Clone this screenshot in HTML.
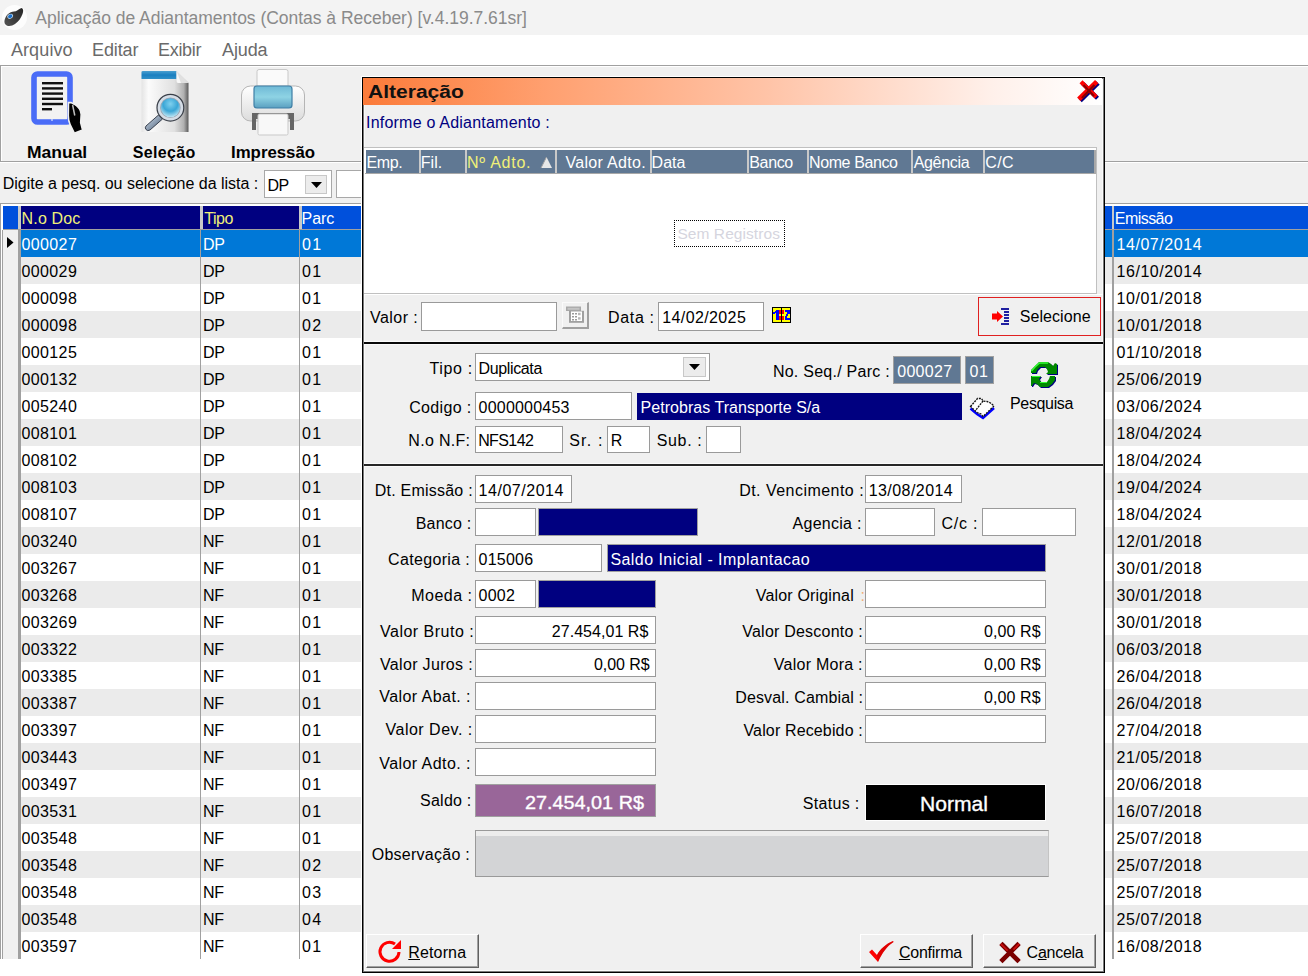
<!DOCTYPE html><html><head><meta charset="utf-8"><style>
html,body{margin:0;padding:0}
body{width:1308px;height:976px;overflow:hidden;position:relative;background:#f0f0f0;font-family:"Liberation Sans",sans-serif}
.t{position:absolute;white-space:nowrap;line-height:1}
.r{position:absolute}
svg{position:absolute;overflow:visible}
u{text-decoration:underline}
</style></head><body>
<div class="r" style="left:0px;top:0px;width:1308px;height:35px;background:#f3f3f3"></div>
<svg style="left:0px;top:3px" width="30" height="30" viewBox="0 0 30 30">
<defs><linearGradient id="bean" x1="0" y1="1" x2="1" y2="0"><stop offset="0" stop-color="#555"/><stop offset="0.5" stop-color="#3a3a3a"/><stop offset="1" stop-color="#262626"/></linearGradient></defs>
<circle cx="14.5" cy="14.5" r="12.5" fill="#fdfdfd"/>
<path d="M21.5 4.9 C23.5 5.5 23.5 8 22.5 11 C21 15 19 18 15 21 C12 23 8 24 5.5 21.5 C3.5 19.5 4.5 15 7.5 11.5 C9.5 9.5 12 8.5 14 8.5 C16.5 8.5 18.5 6 21.5 4.9 Z" fill="url(#bean)"/>
<ellipse cx="10.2" cy="13.3" rx="3" ry="2.3" transform="rotate(-30 10.2 13.3)" fill="#cfe3f5"/>
<ellipse cx="10.2" cy="13.3" rx="2.3" ry="1.7" transform="rotate(-30 10.2 13.3)" fill="#1a6fc8"/>
</svg>
<div class="t" style="left:35.30px;top:10.00px;font-size:17.5px;font-weight:normal;color:#8a8a8a;letter-spacing:-0.022px;">Aplicação de Adiantamentos (Contas à Receber) [v.4.19.7.61sr]</div>
<div class="r" style="left:0px;top:35px;width:1308px;height:30px;background:#ffffff"></div>
<div class="t" style="left:10.90px;top:41.20px;font-size:18px;font-weight:normal;color:#6a6a6a;letter-spacing:0.117px;">Arquivo</div>
<div class="t" style="left:92.00px;top:41.20px;font-size:18px;font-weight:normal;color:#6a6a6a;letter-spacing:-0.100px;">Editar</div>
<div class="t" style="left:158.00px;top:41.20px;font-size:18px;font-weight:normal;color:#6a6a6a;letter-spacing:-0.300px;">Exibir</div>
<div class="t" style="left:222.00px;top:41.20px;font-size:18px;font-weight:normal;color:#6a6a6a;letter-spacing:-0.125px;">Ajuda</div>
<div class="r" style="left:0px;top:65px;width:1308px;height:1px;background:#a0a0a0"></div>
<div class="r" style="left:0px;top:66px;width:1308px;height:1px;background:#ffffff"></div>
<div class="r" style="left:0px;top:65px;width:1px;height:97px;background:#a0a0a0"></div>
<div class="r" style="left:1px;top:66px;width:1px;height:95px;background:#ffffff"></div>
<div class="r" style="left:0px;top:161px;width:1308px;height:1px;background:#a0a0a0"></div>
<div class="r" style="left:0px;top:162px;width:1308px;height:1px;background:#ffffff"></div>
<svg style="left:31px;top:71px" width="52" height="64" viewBox="0 0 52 64">
<rect x="3" y="3" width="36" height="48" rx="3.5" ry="3.5" fill="#f2f2f2" stroke="#4a6cf7" stroke-width="5.6"/>
<rect x="11" y="11" width="21" height="2.4" fill="#111"/>
<rect x="11" y="16.2" width="21" height="2.4" fill="#111"/>
<rect x="11" y="21.4" width="21" height="2.4" fill="#111"/>
<rect x="11" y="26.6" width="21" height="2.4" fill="#111"/>
<rect x="11" y="31.8" width="21" height="2.4" fill="#111"/>
<rect x="11" y="37" width="10" height="2.4" fill="#111"/>
<circle cx="21" cy="49" r="0.9" fill="#cfd8ff"/>
<path d="M37.5 31.6 L40 31.6 L43.3 33.2 C46 35 48.5 37 49.5 40 L50.2 43.4 L49.7 51.6 L51.6 59 L43.3 62.2 L39.1 53.5 C37.5 50 37.3 47 37.3 44.7 Z" fill="#000" stroke="#f0f0f0" stroke-width="1.6"/>
<path d="M41.6 34 L43.8 44.5" stroke="#ffffff" stroke-width="1.5" opacity="0.75"/>
</svg>
<div class="t" style="left:26.61px;top:144.70px;font-size:16px;font-weight:bold;color:#000;letter-spacing:0.000px;transform:scaleX(1.0925);transform-origin:0 0;">Manual</div>
<div class="t" style="left:132.70px;top:144.70px;font-size:16px;font-weight:bold;color:#000;letter-spacing:0.333px;">Seleção</div>
<div class="t" style="left:230.65px;top:144.70px;font-size:16px;font-weight:bold;color:#000;letter-spacing:0.000px;transform:scaleX(1.0506);transform-origin:0 0;">Impressão</div>
<svg style="left:141px;top:71px" width="50" height="62" viewBox="0 0 50 62">
<defs>
<linearGradient id="doc" x1="0" x2="1" y1="0" y2="0"><stop offset="0" stop-color="#e4e4e4"/><stop offset="0.15" stop-color="#fbfbfb"/><stop offset="0.7" stop-color="#e0e0e0"/><stop offset="0.9" stop-color="#b0b0b0"/><stop offset="1" stop-color="#5a5a5a"/></linearGradient>
<linearGradient id="bar" x1="0" x2="0" y1="0" y2="1"><stop offset="0" stop-color="#4a9fd0"/><stop offset="0.5" stop-color="#1a7fc0"/><stop offset="1" stop-color="#3090c8"/></linearGradient>
<radialGradient id="lens" cx="0.5" cy="0.3" r="0.7"><stop offset="0" stop-color="#7fd0ee"/><stop offset="0.55" stop-color="#3aa6d6"/><stop offset="1" stop-color="#bfe6f4"/></radialGradient>
<linearGradient id="hdl" x1="0" x2="1" y1="0" y2="1"><stop offset="0" stop-color="#dfe8f0"/><stop offset="0.5" stop-color="#8fa0b4"/><stop offset="1" stop-color="#4a5a70"/></linearGradient>
</defs>
<path d="M0.5 0 H35.5 L47.5 12 V61 H0.5 Z" fill="url(#doc)"/>
<path d="M0.5 1 Q0.5 0 2 0 H35.5 V8 H0.5 Z" fill="url(#bar)"/>
<path d="M35.5 0 L47.5 12 H37 Q35.5 12 35.5 10 Z" fill="#f8f8f8"/>
<path d="M35.5 0 L47.5 12 L40 12 Z" fill="#d0d0d0" opacity="0.6"/>
<path d="M5 55 L17.5 44 L21.5 48 L9 59 Q6.5 60.5 5 58.5 Q3.5 57 5 55 Z" fill="url(#hdl)" stroke="#3a4250" stroke-width="1"/>
<circle cx="29.4" cy="36.7" r="13.4" fill="#d5dde6" stroke="#3a3f48" stroke-width="1.2"/>
<circle cx="29.4" cy="36.7" r="10.3" fill="#9aa6b4"/>
<circle cx="29.4" cy="36.7" r="9.5" fill="url(#lens)"/>
</svg>
<svg style="left:241px;top:69px" width="66" height="68" viewBox="0 0 66 68">
<defs>
<linearGradient id="pb" x1="0" x2="0" y1="0" y2="1"><stop offset="0" stop-color="#ffffff"/><stop offset="1" stop-color="#dcdcdc"/></linearGradient>
<linearGradient id="bl" x1="0" x2="0" y1="0" y2="1"><stop offset="0" stop-color="#6fb9d6"/><stop offset="0.5" stop-color="#8ed3e4"/><stop offset="1" stop-color="#5a9fc0"/></linearGradient>
</defs>
<rect x="16" y="0.5" width="31" height="20" rx="2" fill="#fafafa" stroke="#c8c8c8"/>
<rect x="0.5" y="17" width="63" height="35" rx="9" fill="url(#pb)" stroke="#b5b5b5"/>
<rect x="13" y="17" width="38" height="22" rx="3" fill="url(#bl)" stroke="#3f7fa6" stroke-width="1.2"/>
<path d="M11 44 H53 V61 H49 V50 H15 V61 H11 Z" fill="#666"/>
<rect x="17" y="45" width="30" height="21" rx="1.5" fill="#f8f8f8" stroke="#c9c9c9"/>
</svg>
<div class="t" style="left:2.80px;top:176.20px;font-size:16px;font-weight:normal;color:#000;letter-spacing:-0.022px;">Digite a pesq. ou selecione da lista :</div>
<div class="r" style="left:264px;top:170px;width:66px;height:26px;background:#fff;border:1px solid #a8a8a8"></div>
<div class="t" style="left:267.60px;top:177.50px;font-size:16px;font-weight:normal;color:#000;letter-spacing:-0.600px;">DP</div>
<div class="r" style="left:305px;top:175px;width:20px;height:17px;background:#ececec;border:1px solid #c8c8c8"></div>
<svg style="left:310.5px;top:182px" width="11" height="6"><path d="M0 0 H11 L5.5 6 Z" fill="#000"/></svg>
<div class="r" style="left:336px;top:170px;width:662px;height:26px;background:#fff;border:1px solid #a8a8a8"></div>
<div class="r" style="left:0px;top:203px;width:1308px;height:1px;background:#a0a0a0"></div>
<div class="r" style="left:0px;top:204px;width:1308px;height:2px;background:#ffffff"></div>
<div class="r" style="left:0px;top:203px;width:1px;height:756px;background:#a0a0a0"></div>
<div class="r" style="left:1px;top:204px;width:2px;height:755px;background:#ffffff"></div>
<div class="r" style="left:3px;top:206px;width:15px;height:23px;background:#0050dc"></div>
<div class="r" style="left:18px;top:206px;width:3px;height:23px;background:#c8c8c8"></div>
<div class="r" style="left:21px;top:206px;width:179px;height:23px;background:#000080"></div>
<div class="r" style="left:200px;top:206px;width:3px;height:23px;background:#c8c8c8"></div>
<div class="r" style="left:203px;top:206px;width:96px;height:23px;background:#000080"></div>
<div class="r" style="left:299px;top:206px;width:3px;height:23px;background:#c8c8c8"></div>
<div class="r" style="left:302px;top:206px;width:810px;height:23px;background:#0050dc"></div>
<div class="r" style="left:1112px;top:206px;width:2px;height:23px;background:#c8c8c8"></div>
<div class="r" style="left:1114px;top:206px;width:194px;height:23px;background:#0050dc"></div>
<div class="r" style="left:3px;top:229px;width:1305px;height:1px;background:#a0a0a0"></div>
<div class="t" style="left:21.60px;top:211.00px;font-size:16px;font-weight:normal;color:#f0f078;letter-spacing:0.150px;">N.o Doc</div>
<div class="t" style="left:204.20px;top:211.00px;font-size:16px;font-weight:normal;color:#f0f078;letter-spacing:-0.467px;">Tipo</div>
<div class="t" style="left:301.60px;top:211.00px;font-size:16px;font-weight:normal;color:#ffffff;letter-spacing:-0.100px;">Parc</div>
<div class="t" style="left:1114.80px;top:211.00px;font-size:16px;font-weight:normal;color:#ffffff;letter-spacing:-0.550px;">Emissão</div>
<div class="r" style="left:21px;top:230px;width:1287px;height:27px;background:#0078d7"></div>
<div class="t" style="left:21.4px;top:236.50px;font-size:16px;color:#ffffff;font-weight:normal;letter-spacing:0.4px;">000027</div>
<div class="t" style="left:203px;top:236.50px;font-size:16px;color:#ffffff;font-weight:normal;letter-spacing:-0.3px;">DP</div>
<div class="t" style="left:302px;top:236.50px;font-size:16px;color:#ffffff;font-weight:normal;letter-spacing:1.3px;">01</div>
<div class="t" style="left:1116.5px;top:236.50px;font-size:16px;color:#ffffff;font-weight:normal;letter-spacing:0.55px;">14/07/2014</div>
<div class="r" style="left:21px;top:257px;width:1287px;height:27px;background:#ebebeb"></div>
<div class="t" style="left:21.4px;top:263.50px;font-size:16px;color:#000;font-weight:normal;letter-spacing:0.4px;">000029</div>
<div class="t" style="left:203px;top:263.50px;font-size:16px;color:#000;font-weight:normal;letter-spacing:-0.3px;">DP</div>
<div class="t" style="left:302px;top:263.50px;font-size:16px;color:#000;font-weight:normal;letter-spacing:1.3px;">01</div>
<div class="t" style="left:1116.5px;top:263.50px;font-size:16px;color:#000;font-weight:normal;letter-spacing:0.55px;">16/10/2014</div>
<div class="r" style="left:21px;top:284px;width:1287px;height:27px;background:#ffffff"></div>
<div class="t" style="left:21.4px;top:290.50px;font-size:16px;color:#000;font-weight:normal;letter-spacing:0.4px;">000098</div>
<div class="t" style="left:203px;top:290.50px;font-size:16px;color:#000;font-weight:normal;letter-spacing:-0.3px;">DP</div>
<div class="t" style="left:302px;top:290.50px;font-size:16px;color:#000;font-weight:normal;letter-spacing:1.3px;">01</div>
<div class="t" style="left:1116.5px;top:290.50px;font-size:16px;color:#000;font-weight:normal;letter-spacing:0.55px;">10/01/2018</div>
<div class="r" style="left:21px;top:311px;width:1287px;height:27px;background:#ebebeb"></div>
<div class="t" style="left:21.4px;top:317.50px;font-size:16px;color:#000;font-weight:normal;letter-spacing:0.4px;">000098</div>
<div class="t" style="left:203px;top:317.50px;font-size:16px;color:#000;font-weight:normal;letter-spacing:-0.3px;">DP</div>
<div class="t" style="left:302px;top:317.50px;font-size:16px;color:#000;font-weight:normal;letter-spacing:1.3px;">02</div>
<div class="t" style="left:1116.5px;top:317.50px;font-size:16px;color:#000;font-weight:normal;letter-spacing:0.55px;">10/01/2018</div>
<div class="r" style="left:21px;top:338px;width:1287px;height:27px;background:#ffffff"></div>
<div class="t" style="left:21.4px;top:344.50px;font-size:16px;color:#000;font-weight:normal;letter-spacing:0.4px;">000125</div>
<div class="t" style="left:203px;top:344.50px;font-size:16px;color:#000;font-weight:normal;letter-spacing:-0.3px;">DP</div>
<div class="t" style="left:302px;top:344.50px;font-size:16px;color:#000;font-weight:normal;letter-spacing:1.3px;">01</div>
<div class="t" style="left:1116.5px;top:344.50px;font-size:16px;color:#000;font-weight:normal;letter-spacing:0.55px;">01/10/2018</div>
<div class="r" style="left:21px;top:365px;width:1287px;height:27px;background:#ebebeb"></div>
<div class="t" style="left:21.4px;top:371.50px;font-size:16px;color:#000;font-weight:normal;letter-spacing:0.4px;">000132</div>
<div class="t" style="left:203px;top:371.50px;font-size:16px;color:#000;font-weight:normal;letter-spacing:-0.3px;">DP</div>
<div class="t" style="left:302px;top:371.50px;font-size:16px;color:#000;font-weight:normal;letter-spacing:1.3px;">01</div>
<div class="t" style="left:1116.5px;top:371.50px;font-size:16px;color:#000;font-weight:normal;letter-spacing:0.55px;">25/06/2019</div>
<div class="r" style="left:21px;top:392px;width:1287px;height:27px;background:#ffffff"></div>
<div class="t" style="left:21.4px;top:398.50px;font-size:16px;color:#000;font-weight:normal;letter-spacing:0.4px;">005240</div>
<div class="t" style="left:203px;top:398.50px;font-size:16px;color:#000;font-weight:normal;letter-spacing:-0.3px;">DP</div>
<div class="t" style="left:302px;top:398.50px;font-size:16px;color:#000;font-weight:normal;letter-spacing:1.3px;">01</div>
<div class="t" style="left:1116.5px;top:398.50px;font-size:16px;color:#000;font-weight:normal;letter-spacing:0.55px;">03/06/2024</div>
<div class="r" style="left:21px;top:419px;width:1287px;height:27px;background:#ebebeb"></div>
<div class="t" style="left:21.4px;top:425.50px;font-size:16px;color:#000;font-weight:normal;letter-spacing:0.4px;">008101</div>
<div class="t" style="left:203px;top:425.50px;font-size:16px;color:#000;font-weight:normal;letter-spacing:-0.3px;">DP</div>
<div class="t" style="left:302px;top:425.50px;font-size:16px;color:#000;font-weight:normal;letter-spacing:1.3px;">01</div>
<div class="t" style="left:1116.5px;top:425.50px;font-size:16px;color:#000;font-weight:normal;letter-spacing:0.55px;">18/04/2024</div>
<div class="r" style="left:21px;top:446px;width:1287px;height:27px;background:#ffffff"></div>
<div class="t" style="left:21.4px;top:452.50px;font-size:16px;color:#000;font-weight:normal;letter-spacing:0.4px;">008102</div>
<div class="t" style="left:203px;top:452.50px;font-size:16px;color:#000;font-weight:normal;letter-spacing:-0.3px;">DP</div>
<div class="t" style="left:302px;top:452.50px;font-size:16px;color:#000;font-weight:normal;letter-spacing:1.3px;">01</div>
<div class="t" style="left:1116.5px;top:452.50px;font-size:16px;color:#000;font-weight:normal;letter-spacing:0.55px;">18/04/2024</div>
<div class="r" style="left:21px;top:473px;width:1287px;height:27px;background:#ebebeb"></div>
<div class="t" style="left:21.4px;top:479.50px;font-size:16px;color:#000;font-weight:normal;letter-spacing:0.4px;">008103</div>
<div class="t" style="left:203px;top:479.50px;font-size:16px;color:#000;font-weight:normal;letter-spacing:-0.3px;">DP</div>
<div class="t" style="left:302px;top:479.50px;font-size:16px;color:#000;font-weight:normal;letter-spacing:1.3px;">01</div>
<div class="t" style="left:1116.5px;top:479.50px;font-size:16px;color:#000;font-weight:normal;letter-spacing:0.55px;">19/04/2024</div>
<div class="r" style="left:21px;top:500px;width:1287px;height:27px;background:#ffffff"></div>
<div class="t" style="left:21.4px;top:506.50px;font-size:16px;color:#000;font-weight:normal;letter-spacing:0.4px;">008107</div>
<div class="t" style="left:203px;top:506.50px;font-size:16px;color:#000;font-weight:normal;letter-spacing:-0.3px;">DP</div>
<div class="t" style="left:302px;top:506.50px;font-size:16px;color:#000;font-weight:normal;letter-spacing:1.3px;">01</div>
<div class="t" style="left:1116.5px;top:506.50px;font-size:16px;color:#000;font-weight:normal;letter-spacing:0.55px;">18/04/2024</div>
<div class="r" style="left:21px;top:527px;width:1287px;height:27px;background:#ebebeb"></div>
<div class="t" style="left:21.4px;top:533.50px;font-size:16px;color:#000;font-weight:normal;letter-spacing:0.4px;">003240</div>
<div class="t" style="left:203px;top:533.50px;font-size:16px;color:#000;font-weight:normal;letter-spacing:-0.3px;">NF</div>
<div class="t" style="left:302px;top:533.50px;font-size:16px;color:#000;font-weight:normal;letter-spacing:1.3px;">01</div>
<div class="t" style="left:1116.5px;top:533.50px;font-size:16px;color:#000;font-weight:normal;letter-spacing:0.55px;">12/01/2018</div>
<div class="r" style="left:21px;top:554px;width:1287px;height:27px;background:#ffffff"></div>
<div class="t" style="left:21.4px;top:560.50px;font-size:16px;color:#000;font-weight:normal;letter-spacing:0.4px;">003267</div>
<div class="t" style="left:203px;top:560.50px;font-size:16px;color:#000;font-weight:normal;letter-spacing:-0.3px;">NF</div>
<div class="t" style="left:302px;top:560.50px;font-size:16px;color:#000;font-weight:normal;letter-spacing:1.3px;">01</div>
<div class="t" style="left:1116.5px;top:560.50px;font-size:16px;color:#000;font-weight:normal;letter-spacing:0.55px;">30/01/2018</div>
<div class="r" style="left:21px;top:581px;width:1287px;height:27px;background:#ebebeb"></div>
<div class="t" style="left:21.4px;top:587.50px;font-size:16px;color:#000;font-weight:normal;letter-spacing:0.4px;">003268</div>
<div class="t" style="left:203px;top:587.50px;font-size:16px;color:#000;font-weight:normal;letter-spacing:-0.3px;">NF</div>
<div class="t" style="left:302px;top:587.50px;font-size:16px;color:#000;font-weight:normal;letter-spacing:1.3px;">01</div>
<div class="t" style="left:1116.5px;top:587.50px;font-size:16px;color:#000;font-weight:normal;letter-spacing:0.55px;">30/01/2018</div>
<div class="r" style="left:21px;top:608px;width:1287px;height:27px;background:#ffffff"></div>
<div class="t" style="left:21.4px;top:614.50px;font-size:16px;color:#000;font-weight:normal;letter-spacing:0.4px;">003269</div>
<div class="t" style="left:203px;top:614.50px;font-size:16px;color:#000;font-weight:normal;letter-spacing:-0.3px;">NF</div>
<div class="t" style="left:302px;top:614.50px;font-size:16px;color:#000;font-weight:normal;letter-spacing:1.3px;">01</div>
<div class="t" style="left:1116.5px;top:614.50px;font-size:16px;color:#000;font-weight:normal;letter-spacing:0.55px;">30/01/2018</div>
<div class="r" style="left:21px;top:635px;width:1287px;height:27px;background:#ebebeb"></div>
<div class="t" style="left:21.4px;top:641.50px;font-size:16px;color:#000;font-weight:normal;letter-spacing:0.4px;">003322</div>
<div class="t" style="left:203px;top:641.50px;font-size:16px;color:#000;font-weight:normal;letter-spacing:-0.3px;">NF</div>
<div class="t" style="left:302px;top:641.50px;font-size:16px;color:#000;font-weight:normal;letter-spacing:1.3px;">01</div>
<div class="t" style="left:1116.5px;top:641.50px;font-size:16px;color:#000;font-weight:normal;letter-spacing:0.55px;">06/03/2018</div>
<div class="r" style="left:21px;top:662px;width:1287px;height:27px;background:#ffffff"></div>
<div class="t" style="left:21.4px;top:668.50px;font-size:16px;color:#000;font-weight:normal;letter-spacing:0.4px;">003385</div>
<div class="t" style="left:203px;top:668.50px;font-size:16px;color:#000;font-weight:normal;letter-spacing:-0.3px;">NF</div>
<div class="t" style="left:302px;top:668.50px;font-size:16px;color:#000;font-weight:normal;letter-spacing:1.3px;">01</div>
<div class="t" style="left:1116.5px;top:668.50px;font-size:16px;color:#000;font-weight:normal;letter-spacing:0.55px;">26/04/2018</div>
<div class="r" style="left:21px;top:689px;width:1287px;height:27px;background:#ebebeb"></div>
<div class="t" style="left:21.4px;top:695.50px;font-size:16px;color:#000;font-weight:normal;letter-spacing:0.4px;">003387</div>
<div class="t" style="left:203px;top:695.50px;font-size:16px;color:#000;font-weight:normal;letter-spacing:-0.3px;">NF</div>
<div class="t" style="left:302px;top:695.50px;font-size:16px;color:#000;font-weight:normal;letter-spacing:1.3px;">01</div>
<div class="t" style="left:1116.5px;top:695.50px;font-size:16px;color:#000;font-weight:normal;letter-spacing:0.55px;">26/04/2018</div>
<div class="r" style="left:21px;top:716px;width:1287px;height:27px;background:#ffffff"></div>
<div class="t" style="left:21.4px;top:722.50px;font-size:16px;color:#000;font-weight:normal;letter-spacing:0.4px;">003397</div>
<div class="t" style="left:203px;top:722.50px;font-size:16px;color:#000;font-weight:normal;letter-spacing:-0.3px;">NF</div>
<div class="t" style="left:302px;top:722.50px;font-size:16px;color:#000;font-weight:normal;letter-spacing:1.3px;">01</div>
<div class="t" style="left:1116.5px;top:722.50px;font-size:16px;color:#000;font-weight:normal;letter-spacing:0.55px;">27/04/2018</div>
<div class="r" style="left:21px;top:743px;width:1287px;height:27px;background:#ebebeb"></div>
<div class="t" style="left:21.4px;top:749.50px;font-size:16px;color:#000;font-weight:normal;letter-spacing:0.4px;">003443</div>
<div class="t" style="left:203px;top:749.50px;font-size:16px;color:#000;font-weight:normal;letter-spacing:-0.3px;">NF</div>
<div class="t" style="left:302px;top:749.50px;font-size:16px;color:#000;font-weight:normal;letter-spacing:1.3px;">01</div>
<div class="t" style="left:1116.5px;top:749.50px;font-size:16px;color:#000;font-weight:normal;letter-spacing:0.55px;">21/05/2018</div>
<div class="r" style="left:21px;top:770px;width:1287px;height:27px;background:#ffffff"></div>
<div class="t" style="left:21.4px;top:776.50px;font-size:16px;color:#000;font-weight:normal;letter-spacing:0.4px;">003497</div>
<div class="t" style="left:203px;top:776.50px;font-size:16px;color:#000;font-weight:normal;letter-spacing:-0.3px;">NF</div>
<div class="t" style="left:302px;top:776.50px;font-size:16px;color:#000;font-weight:normal;letter-spacing:1.3px;">01</div>
<div class="t" style="left:1116.5px;top:776.50px;font-size:16px;color:#000;font-weight:normal;letter-spacing:0.55px;">20/06/2018</div>
<div class="r" style="left:21px;top:797px;width:1287px;height:27px;background:#ebebeb"></div>
<div class="t" style="left:21.4px;top:803.50px;font-size:16px;color:#000;font-weight:normal;letter-spacing:0.4px;">003531</div>
<div class="t" style="left:203px;top:803.50px;font-size:16px;color:#000;font-weight:normal;letter-spacing:-0.3px;">NF</div>
<div class="t" style="left:302px;top:803.50px;font-size:16px;color:#000;font-weight:normal;letter-spacing:1.3px;">01</div>
<div class="t" style="left:1116.5px;top:803.50px;font-size:16px;color:#000;font-weight:normal;letter-spacing:0.55px;">16/07/2018</div>
<div class="r" style="left:21px;top:824px;width:1287px;height:27px;background:#ffffff"></div>
<div class="t" style="left:21.4px;top:830.50px;font-size:16px;color:#000;font-weight:normal;letter-spacing:0.4px;">003548</div>
<div class="t" style="left:203px;top:830.50px;font-size:16px;color:#000;font-weight:normal;letter-spacing:-0.3px;">NF</div>
<div class="t" style="left:302px;top:830.50px;font-size:16px;color:#000;font-weight:normal;letter-spacing:1.3px;">01</div>
<div class="t" style="left:1116.5px;top:830.50px;font-size:16px;color:#000;font-weight:normal;letter-spacing:0.55px;">25/07/2018</div>
<div class="r" style="left:21px;top:851px;width:1287px;height:27px;background:#ebebeb"></div>
<div class="t" style="left:21.4px;top:857.50px;font-size:16px;color:#000;font-weight:normal;letter-spacing:0.4px;">003548</div>
<div class="t" style="left:203px;top:857.50px;font-size:16px;color:#000;font-weight:normal;letter-spacing:-0.3px;">NF</div>
<div class="t" style="left:302px;top:857.50px;font-size:16px;color:#000;font-weight:normal;letter-spacing:1.3px;">02</div>
<div class="t" style="left:1116.5px;top:857.50px;font-size:16px;color:#000;font-weight:normal;letter-spacing:0.55px;">25/07/2018</div>
<div class="r" style="left:21px;top:878px;width:1287px;height:27px;background:#ffffff"></div>
<div class="t" style="left:21.4px;top:884.50px;font-size:16px;color:#000;font-weight:normal;letter-spacing:0.4px;">003548</div>
<div class="t" style="left:203px;top:884.50px;font-size:16px;color:#000;font-weight:normal;letter-spacing:-0.3px;">NF</div>
<div class="t" style="left:302px;top:884.50px;font-size:16px;color:#000;font-weight:normal;letter-spacing:1.3px;">03</div>
<div class="t" style="left:1116.5px;top:884.50px;font-size:16px;color:#000;font-weight:normal;letter-spacing:0.55px;">25/07/2018</div>
<div class="r" style="left:21px;top:905px;width:1287px;height:27px;background:#ebebeb"></div>
<div class="t" style="left:21.4px;top:911.50px;font-size:16px;color:#000;font-weight:normal;letter-spacing:0.4px;">003548</div>
<div class="t" style="left:203px;top:911.50px;font-size:16px;color:#000;font-weight:normal;letter-spacing:-0.3px;">NF</div>
<div class="t" style="left:302px;top:911.50px;font-size:16px;color:#000;font-weight:normal;letter-spacing:1.3px;">04</div>
<div class="t" style="left:1116.5px;top:911.50px;font-size:16px;color:#000;font-weight:normal;letter-spacing:0.55px;">25/07/2018</div>
<div class="r" style="left:21px;top:932px;width:1287px;height:27px;background:#ffffff"></div>
<div class="t" style="left:21.4px;top:938.50px;font-size:16px;color:#000;font-weight:normal;letter-spacing:0.4px;">003597</div>
<div class="t" style="left:203px;top:938.50px;font-size:16px;color:#000;font-weight:normal;letter-spacing:-0.3px;">NF</div>
<div class="t" style="left:302px;top:938.50px;font-size:16px;color:#000;font-weight:normal;letter-spacing:1.3px;">01</div>
<div class="t" style="left:1116.5px;top:938.50px;font-size:16px;color:#000;font-weight:normal;letter-spacing:0.55px;">16/08/2018</div>
<div class="r" style="left:3px;top:230px;width:15px;height:729px;background:#f0f0f0"></div>
<div class="r" style="left:2px;top:230px;width:1px;height:729px;background:#a0a0a0"></div>
<div class="r" style="left:18px;top:230px;width:3px;height:729px;background:#a0a0a0"></div>
<div class="r" style="left:200px;top:230px;width:1px;height:729px;background:#a0a0a0"></div>
<div class="r" style="left:299px;top:230px;width:1px;height:729px;background:#a0a0a0"></div>
<div class="r" style="left:1112px;top:230px;width:2px;height:729px;background:#a0a0a0"></div>
<svg style="left:7px;top:237px" width="7" height="11"><path d="M0 0 L6.5 5.5 L0 11 Z" fill="#000"/></svg>
<div class="r" style="left:0px;top:959px;width:1308px;height:17px;background:#ffffff"></div>
<div class="r" style="left:361px;top:76px;width:744px;height:1px;background:#ffffff"></div>
<div class="r" style="left:361px;top:76px;width:1px;height:897px;background:#ffffff"></div>
<div class="r" style="left:362px;top:77px;width:743px;height:896px;background:#f0f0f0;box-sizing:border-box;border:1px solid #000;box-shadow:inset 0 0 0 1px #7a7a7a, inset 0 0 0 2px #fafafa"></div>
<div class="r" style="left:363px;top:78px;width:739px;height:27px;background:linear-gradient(to right,#fb7b3a 0%,#ffa070 25%,#ffc4a8 55%,#fff0ea 85%,#ffffff 100%)"></div>
<div class="t" style="left:367.83px;top:83.00px;font-size:18px;font-weight:bold;color:#111;letter-spacing:0.000px;transform:scaleX(1.1675);transform-origin:0 0;">Alteração</div>
<svg style="left:1076px;top:80px" width="24" height="22" viewBox="0 0 24 22">
<g transform="translate(1.3 1.3)" stroke="#000080" stroke-linecap="square"><path d="M6.5 3.3 L18.7 15.5" stroke-width="4.2"/><path d="M19 3.3 L4.5 17.5" stroke-width="4.8"/></g>
<g stroke="#ff0000" stroke-linecap="square"><path d="M6.5 3.3 L18.7 15.5" stroke-width="4.2"/><path d="M19 3.3 L4.5 17.5" stroke-width="4.8"/></g>
<g stroke="#8a0000" stroke-linecap="butt"><path d="M7.5 5 L18 16" stroke-width="2"/><path d="M18.5 5 L6 18" stroke-width="2.4"/></g>
</svg>
<div class="t" style="left:366.00px;top:114.70px;font-size:16px;font-weight:normal;color:#000080;letter-spacing:0.217px;">Informe o Adiantamento :</div>
<div class="r" style="left:364px;top:147px;width:733px;height:147px;background:#ffffff;box-sizing:border-box;border-style:solid;border-color:#c0c0c0;border-width:1px 1px 1px 0"></div>
<div class="r" style="left:366px;top:150px;width:728px;height:23px;background:#607893"></div>
<div class="r" style="left:1094px;top:150px;width:2px;height:23px;background:#a8a8a8"></div>
<div class="r" style="left:419px;top:150px;width:2px;height:23px;background:#c8c8c8"></div>
<div class="r" style="left:465px;top:150px;width:2px;height:23px;background:#c8c8c8"></div>
<div class="r" style="left:555px;top:150px;width:2px;height:23px;background:#c8c8c8"></div>
<div class="r" style="left:650px;top:150px;width:2px;height:23px;background:#c8c8c8"></div>
<div class="r" style="left:747px;top:150px;width:2px;height:23px;background:#c8c8c8"></div>
<div class="r" style="left:807px;top:150px;width:2px;height:23px;background:#c8c8c8"></div>
<div class="r" style="left:911px;top:150px;width:2px;height:23px;background:#c8c8c8"></div>
<div class="r" style="left:983px;top:150px;width:2px;height:23px;background:#c8c8c8"></div>
<div class="r" style="left:365px;top:173px;width:731px;height:1px;background:#a8a8a8"></div>
<div class="r" style="left:364px;top:294px;width:739px;height:1px;background:#ffffff"></div>
<div class="t" style="left:366.40px;top:155.30px;font-size:16px;font-weight:normal;color:#fff;letter-spacing:-0.367px;">Emp.</div>
<div class="t" style="left:420.70px;top:155.30px;font-size:16px;font-weight:normal;color:#fff;letter-spacing:0.100px;">Fil.</div>
<div class="t" style="left:467.00px;top:155.30px;font-size:16px;font-weight:normal;color:#f0f078;letter-spacing:0.743px;">Nº Adto.</div>
<div class="t" style="left:565.40px;top:155.30px;font-size:16px;font-weight:normal;color:#fff;letter-spacing:0.310px;">Valor Adto.</div>
<div class="t" style="left:651.60px;top:155.30px;font-size:16px;font-weight:normal;color:#fff;letter-spacing:0.033px;">Data</div>
<div class="t" style="left:749.30px;top:155.30px;font-size:16px;font-weight:normal;color:#fff;letter-spacing:-0.350px;">Banco</div>
<div class="t" style="left:809.00px;top:155.30px;font-size:16px;font-weight:normal;color:#fff;letter-spacing:-0.400px;">Nome Banco</div>
<div class="t" style="left:913.70px;top:155.30px;font-size:16px;font-weight:normal;color:#fff;letter-spacing:-0.317px;">Agência</div>
<div class="t" style="left:985.20px;top:155.30px;font-size:16px;font-weight:normal;color:#fff;letter-spacing:0.450px;">C/C</div>
<svg style="left:540.5px;top:157px" width="11" height="11"><path d="M5.5 0 L11 11 H0 Z" fill="#e8e8e8"/><path d="M5.5 0 L0 11" stroke="#a0a0a0" stroke-width="1"/></svg>
<div class="r" style="left:674px;top:220px;width:111px;height:27px;box-sizing:border-box;border:1px dotted #000"></div>
<div class="t" style="left:677.40px;top:226.30px;font-size:15.5px;font-weight:normal;color:#d5d5de;letter-spacing:0.075px;">Sem Registros</div>
<div class="t" style="left:370.00px;top:309.70px;font-size:16px;font-weight:normal;color:#000;letter-spacing:0.450px;">Valor :</div>
<div class="r" style="left:421px;top:302px;width:134px;height:27px;background:#fff;border:1px solid #9a9a9a"></div>
<div class="r" style="left:562px;top:302px;width:27px;height:27px;box-sizing:border-box;background:#f0f0f0;border-style:solid;border-width:1px 2px 2px 1px;border-color:#fafafa #a0a0a0 #a0a0a0 #fafafa"></div>
<svg style="left:566px;top:306px" width="19" height="17" viewBox="0 0 19 17">
<rect x="0" y="0.5" width="15" height="4.5" fill="#a8a8a8"/>
<rect x="1.5" y="1.8" width="12" height="2" fill="#c4c4c4"/>
<rect x="3" y="4.8" width="15" height="12" fill="#a0a0a0"/>
<rect x="5" y="5.5" width="11" height="9.5" fill="#ffffff"/>
<g fill="#9a9a9a"><rect x="6" y="7" width="2" height="1.5"/><rect x="9" y="7" width="2" height="1.5"/><rect x="6" y="10" width="2" height="1.5"/><rect x="9" y="10" width="2" height="1.5"/><rect x="6" y="13" width="2" height="1.5"/><rect x="9" y="13" width="2" height="1.5"/><rect x="12" y="6.8" width="2.6" height="2.4" fill="#b8b8b8"/><rect x="12" y="11.2" width="2.6" height="2.4" fill="#b8b8b8"/></g>
</svg>
<div class="t" style="left:608.00px;top:309.70px;font-size:16px;font-weight:normal;color:#000;letter-spacing:0.660px;">Data :</div>
<div class="r" style="left:658px;top:302px;width:104px;height:27px;background:#fff;border:1px solid #9a9a9a"></div>
<div class="t" style="left:662.30px;top:309.70px;font-size:16px;font-weight:normal;color:#000;letter-spacing:0.378px;">14/02/2025</div>
<svg style="left:772px;top:307px" width="19" height="16" viewBox="0 0 19 16" shape-rendering="crispEdges">
<rect x="0" y="0" width="19" height="16" fill="#000"/>
<rect x="1" y="1" width="17" height="14" fill="#ffff00"/>
<g fill="#0000ff"><rect x="4" y="3" width="3" height="10"/><rect x="3" y="4" width="1" height="2"/><rect x="1" y="5" width="2" height="2"/>
<rect x="13" y="3" width="5" height="2"/><rect x="15" y="5" width="3" height="2"/><rect x="14" y="7" width="2" height="2"/><rect x="13" y="9" width="2" height="2"/><rect x="13" y="11" width="5" height="2"/></g>
<g fill="#ff0000"><rect x="7" y="3" width="5" height="4"/><rect x="7" y="9" width="5" height="4"/></g>
<rect x="9" y="1" width="1" height="14" fill="#000"/>
</svg>
<div class="r" style="left:978px;top:297px;width:123px;height:39px;box-sizing:border-box;border:1px solid #e02020;background:#f0f0f0"></div>
<svg style="left:992px;top:308px" width="18" height="17" viewBox="0 0 18 17">
<path d="M0 5.5 H5 V3 L11 8.5 L5 14 V11.5 H0 Z" fill="#ff0000"/>
<g fill="#2020a0"><rect x="9" y="0" width="8" height="2"/><rect x="12" y="3" width="5" height="2"/><rect x="12" y="6" width="5" height="2"/><rect x="12" y="9" width="5" height="2"/><rect x="12" y="12" width="5" height="2"/><rect x="9" y="15" width="8" height="2"/></g>
</svg>
<div class="t" style="left:1019.70px;top:309.30px;font-size:16px;font-weight:normal;color:#000;letter-spacing:0.075px;">Selecione</div>
<div class="r" style="left:364px;top:341px;width:739px;height:1px;background:#fafafa"></div>
<div class="r" style="left:364px;top:342px;width:739px;height:2px;background:#080808"></div>
<div class="r" style="left:364px;top:344px;width:739px;height:1px;background:#fafafa"></div>
<div class="t" style="left:429.40px;top:360.90px;font-size:16px;font-weight:normal;color:#000;letter-spacing:0.660px;">Tipo :</div>
<div class="r" style="left:475px;top:353px;width:233px;height:26px;background:#fff;border:1px solid #9a9a9a"></div>
<div class="t" style="left:478.60px;top:360.90px;font-size:16px;font-weight:normal;color:#000;letter-spacing:-0.375px;">Duplicata</div>
<div class="r" style="left:683px;top:357px;width:21px;height:18px;background:#ececec;border:1px solid #c8c8c8"></div>
<svg style="left:689px;top:364px" width="11" height="6"><path d="M0 0 H11 L5.5 6 Z" fill="#000"/></svg>
<div class="t" style="left:772.90px;top:363.50px;font-size:16px;font-weight:normal;color:#000;letter-spacing:0.253px;">No. Seq./ Parc :</div>
<div class="r" style="left:893px;top:356px;width:66px;height:26px;background:#607893;border:1px solid #a0a0a0"></div>
<div class="t" style="left:897.20px;top:363.50px;font-size:16px;font-weight:normal;color:#fff;letter-spacing:0.300px;">000027</div>
<div class="r" style="left:965px;top:356px;width:27px;height:26px;background:#607893;border:1px solid #a0a0a0"></div>
<div class="t" style="left:969.60px;top:363.50px;font-size:16px;font-weight:normal;color:#fff;letter-spacing:0.400px;">01</div>
<svg style="left:1031px;top:362px" width="27" height="27" viewBox="0 0 27 27">
<g transform="translate(1 1)" fill="#000080">
<path d="M0 11 L0 8 L3 5 L5 3 L8 0 L17 0 L20 2 L22 4 L24 1 L26 2 L26 12 L15 12 L17 10 L16 7 L14 5 L9 5 L6 8 L5 11 Z"/>
<path d="M0 14 L10 14 L8 17 L10 20 L16 20 L18 17 L19 14 L24 14 L24 18 L21 22 L17 25 L9 25 L6 22 L3 21 L1 24 L0 24 Z"/>
</g>
<g fill="#008800">
<path d="M0 11 L0 8 L3 5 L5 3 L8 0 L17 0 L20 2 L22 4 L24 1 L26 2 L26 12 L15 12 L17 10 L16 7 L14 5 L9 5 L6 8 L5 11 Z"/>
<path d="M0 14 L10 14 L8 17 L10 20 L16 20 L18 17 L19 14 L24 14 L24 18 L21 22 L17 25 L9 25 L6 22 L3 21 L1 24 L0 24 Z"/>
</g>
<path d="M0.5 9 L4 5 L8.5 1 L17 1" stroke="#33ff33" stroke-width="1.5" fill="none"/>
<path d="M1 14.5 L9 14.5 M9 20.5 L16 20.5" stroke="#33ff33" stroke-width="1.2" fill="none"/>
</svg>
<div class="t" style="left:1010.00px;top:395.50px;font-size:16px;font-weight:normal;color:#000;letter-spacing:-0.343px;">Pesquisa</div>
<div class="t" style="left:409.20px;top:399.50px;font-size:16px;font-weight:normal;color:#000;letter-spacing:0.343px;">Codigo :</div>
<div class="r" style="left:475px;top:392px;width:155px;height:26px;background:#fff;border:1px solid #9a9a9a"></div>
<div class="t" style="left:478.60px;top:399.70px;font-size:16px;font-weight:normal;color:#000;letter-spacing:0.200px;">0000000453</div>
<div class="r" style="left:637px;top:393px;width:325px;height:27px;background:#000080"></div>
<div class="t" style="left:640.60px;top:399.70px;font-size:16px;font-weight:normal;color:#fff;letter-spacing:0.039px;">Petrobras Transporte S/a</div>
<svg style="left:969px;top:397px" width="26" height="22" viewBox="0 0 26 22">
<path d="M1.5 11.5 L8 17 L14 21 L25 11" fill="none" stroke="#0000ff" stroke-width="2.5"/>
<path d="M1.5 9.5 L8.5 1.5 L12.5 1.5 L14 4 L18 4.5 L21.5 6 L25 9 L14 19.5 L12 17 L8 15.5 Z" fill="#ffffff" stroke="#111" stroke-width="1.3" stroke-dasharray="2 1"/>
<path d="M14 4 L6.5 13.5" stroke="#111" stroke-width="1.3" stroke-dasharray="2 1"/>
</svg>
<div class="t" style="left:408.30px;top:433.00px;font-size:16px;font-weight:normal;color:#000;letter-spacing:0.314px;">N.o N.F:</div>
<div class="r" style="left:475px;top:426px;width:86px;height:25px;background:#fff;border:1px solid #9a9a9a"></div>
<div class="t" style="left:478.15px;top:432.60px;font-size:16px;font-weight:normal;color:#000;letter-spacing:-0.600px;">NFS142</div>
<div class="t" style="left:569.30px;top:433.00px;font-size:16px;font-weight:normal;color:#000;letter-spacing:1.150px;">Sr. :</div>
<div class="r" style="left:607px;top:426px;width:41px;height:25px;background:#fff;border:1px solid #9a9a9a"></div>
<div class="t" style="left:610.80px;top:433.00px;font-size:16px;font-weight:normal;color:#000;letter-spacing:0.000px;">R</div>
<div class="t" style="left:656.70px;top:433.00px;font-size:16px;font-weight:normal;color:#000;letter-spacing:0.660px;">Sub. :</div>
<div class="r" style="left:706px;top:426px;width:33px;height:25px;background:#fff;border:1px solid #9a9a9a"></div>
<div class="r" style="left:364px;top:463px;width:739px;height:1px;background:#fafafa"></div>
<div class="r" style="left:364px;top:464px;width:739px;height:2px;background:#262626"></div>
<div class="r" style="left:364px;top:466px;width:739px;height:1px;background:#fafafa"></div>
<div class="t" style="left:374.70px;top:483.00px;font-size:16px;font-weight:normal;color:#000;letter-spacing:0.233px;">Dt. Emissão :</div>
<div class="r" style="left:475px;top:475px;width:95px;height:26px;background:#fff;border:1px solid #9a9a9a"></div>
<div class="t" style="left:478.60px;top:482.80px;font-size:16px;font-weight:normal;color:#000;letter-spacing:0.522px;">14/07/2014</div>
<div class="t" style="left:739.20px;top:482.70px;font-size:16px;font-weight:normal;color:#000;letter-spacing:0.467px;">Dt. Vencimento :</div>
<div class="r" style="left:865px;top:475px;width:95px;height:26px;background:#fff;border:1px solid #9a9a9a"></div>
<div class="t" style="left:868.70px;top:482.60px;font-size:16px;font-weight:normal;color:#000;letter-spacing:0.444px;">13/08/2014</div>
<div class="t" style="left:415.70px;top:515.80px;font-size:16px;font-weight:normal;color:#000;letter-spacing:0.217px;">Banco :</div>
<div class="r" style="left:475px;top:508px;width:59px;height:26px;background:#fff;border:1px solid #9a9a9a"></div>
<div class="r" style="left:538px;top:508px;width:160px;height:28px;background:#000080;box-sizing:border-box;border:1px solid #a0a0a0"></div>
<div class="t" style="left:792.60px;top:515.70px;font-size:16px;font-weight:normal;color:#000;letter-spacing:0.263px;">Agencia :</div>
<div class="r" style="left:865px;top:508px;width:68px;height:26px;background:#fff;border:1px solid #9a9a9a"></div>
<div class="t" style="left:941.50px;top:515.90px;font-size:16px;font-weight:normal;color:#000;letter-spacing:0.750px;">C/c :</div>
<div class="r" style="left:982px;top:508px;width:92px;height:26px;background:#fff;border:1px solid #9a9a9a"></div>
<div class="t" style="left:388.00px;top:551.60px;font-size:16px;font-weight:normal;color:#000;letter-spacing:0.340px;">Categoria :</div>
<div class="r" style="left:475px;top:544px;width:125px;height:26px;background:#fff;border:1px solid #9a9a9a"></div>
<div class="t" style="left:478.60px;top:551.60px;font-size:16px;font-weight:normal;color:#000;letter-spacing:0.220px;">015006</div>
<div class="r" style="left:607px;top:544px;width:439px;height:28px;background:#000080;box-sizing:border-box;border:1px solid #a0a0a0"></div>
<div class="t" style="left:610.40px;top:551.60px;font-size:16px;font-weight:normal;color:#fff;letter-spacing:0.450px;">Saldo Inicial - Implantacao</div>
<div class="t" style="left:411.20px;top:587.70px;font-size:16px;font-weight:normal;color:#000;letter-spacing:0.500px;">Moeda :</div>
<div class="r" style="left:475px;top:580px;width:59px;height:26px;background:#fff;border:1px solid #9a9a9a"></div>
<div class="t" style="left:478.60px;top:587.50px;font-size:16px;font-weight:normal;color:#000;letter-spacing:0.233px;">0002</div>
<div class="r" style="left:538px;top:580px;width:118px;height:28px;background:#000080;box-sizing:border-box;border:1px solid #a0a0a0"></div>
<div class="t" style="left:755.80px;top:587.90px;font-size:16px;font-weight:normal;color:#000;letter-spacing:0.169px;">Valor Original</div>
<div class="t" style="left:860.5px;top:587.90px;font-size:16px;color:#f2b27a;font-weight:normal;letter-spacing:0px;">:</div>
<div class="r" style="left:865px;top:580px;width:179px;height:26px;background:#fff;border:1px solid #9a9a9a"></div>
<div class="r" style="left:475px;top:616px;width:179px;height:26px;background:#fff;border:1px solid #9a9a9a"></div>
<div class="r" style="left:475px;top:649px;width:179px;height:26px;background:#fff;border:1px solid #9a9a9a"></div>
<div class="r" style="left:475px;top:682px;width:179px;height:26px;background:#fff;border:1px solid #9a9a9a"></div>
<div class="r" style="left:475px;top:715px;width:179px;height:26px;background:#fff;border:1px solid #9a9a9a"></div>
<div class="r" style="left:475px;top:748px;width:179px;height:26px;background:#fff;border:1px solid #9a9a9a"></div>
<div class="r" style="left:865px;top:616px;width:179px;height:26px;background:#fff;border:1px solid #9a9a9a"></div>
<div class="r" style="left:865px;top:649px;width:179px;height:26px;background:#fff;border:1px solid #9a9a9a"></div>
<div class="r" style="left:865px;top:682px;width:179px;height:26px;background:#fff;border:1px solid #9a9a9a"></div>
<div class="r" style="left:865px;top:715px;width:179px;height:26px;background:#fff;border:1px solid #9a9a9a"></div>
<div class="t" style="left:380.00px;top:624.00px;font-size:16px;font-weight:normal;color:#000;letter-spacing:0.500px;">Valor Bruto :</div>
<div class="t" style="left:551.80px;top:624.00px;font-size:16px;font-weight:normal;color:#000;letter-spacing:0.045px;">27.454,01 R$</div>
<div class="t" style="left:380.00px;top:657.20px;font-size:16px;font-weight:normal;color:#000;letter-spacing:0.333px;">Valor Juros :</div>
<div class="t" style="left:594.00px;top:656.60px;font-size:16px;font-weight:normal;color:#000;letter-spacing:-0.067px;">0,00 R$</div>
<div class="t" style="left:379.30px;top:689.10px;font-size:16px;font-weight:normal;color:#000;letter-spacing:0.433px;">Valor Abat. :</div>
<div class="t" style="left:385.50px;top:722.40px;font-size:16px;font-weight:normal;color:#000;letter-spacing:0.500px;">Valor Dev. :</div>
<div class="t" style="left:379.30px;top:755.60px;font-size:16px;font-weight:normal;color:#000;letter-spacing:0.433px;">Valor Adto. :</div>
<div class="t" style="left:420.00px;top:792.50px;font-size:16px;font-weight:normal;color:#000;letter-spacing:0.250px;">Saldo :</div>
<div class="t" style="left:371.70px;top:847.20px;font-size:16px;font-weight:normal;color:#000;letter-spacing:0.264px;">Observação :</div>
<div class="t" style="left:742.30px;top:623.60px;font-size:16px;font-weight:normal;color:#000;letter-spacing:0.220px;">Valor Desconto :</div>
<div class="t" style="left:984.00px;top:624.00px;font-size:16px;font-weight:normal;color:#000;letter-spacing:0.083px;">0,00 R$</div>
<div class="t" style="left:773.80px;top:656.80px;font-size:16px;font-weight:normal;color:#000;letter-spacing:0.255px;">Valor Mora :</div>
<div class="t" style="left:984.00px;top:657.00px;font-size:16px;font-weight:normal;color:#000;letter-spacing:0.083px;">0,00 R$</div>
<div class="t" style="left:735.20px;top:689.50px;font-size:16px;font-weight:normal;color:#000;letter-spacing:0.150px;">Desval. Cambial :</div>
<div class="t" style="left:984.00px;top:690.00px;font-size:16px;font-weight:normal;color:#000;letter-spacing:0.083px;">0,00 R$</div>
<div class="t" style="left:743.50px;top:722.50px;font-size:16px;font-weight:normal;color:#000;letter-spacing:0.140px;">Valor Recebido :</div>
<div class="t" style="left:802.80px;top:796.30px;font-size:16px;font-weight:normal;color:#000;letter-spacing:0.300px;">Status :</div>
<div class="r" style="left:475px;top:784px;width:181px;height:33px;background:#996699;box-sizing:border-box;border:1px solid #a0a0a0"></div>
<div class="t" style="left:525.43px;top:793.90px;font-size:18.5px;font-weight:normal;color:#fff;letter-spacing:0.000px;transform:scaleX(1.0709);transform-origin:0 0;-webkit-text-stroke:0.35px #fff;">27.454,01 R$</div>
<div class="r" style="left:865px;top:784px;width:181px;height:37px;background:#ffffff"></div>
<div class="r" style="left:866px;top:785px;width:179px;height:35px;background:#000"></div>
<div class="t" style="left:919.99px;top:792.60px;font-size:21px;font-weight:normal;color:#fff;letter-spacing:0.000px;transform:scaleX(1.0047);transform-origin:0 0;-webkit-text-stroke:0.35px #fff;">Normal</div>
<div class="r" style="left:475px;top:830px;width:574px;height:47px;background:linear-gradient(#ececec 0px,#ececec 5px,#d3d4d6 5px);box-sizing:border-box;border:1px solid #999;border-right-color:#c4c4c4"></div>
<div class="r" style="left:366px;top:934px;width:113px;height:34px;background:#f0f0f0;box-sizing:border-box;border:1px solid;border-color:#ffffff #606060 #606060 #ffffff;box-shadow:inset -1px -1px 0 #a0a0a0"></div>
<svg style="left:377px;top:939px" width="26" height="25" viewBox="0 0 26 25">
<path d="M18 5 A9.5 9.5 0 1 0 22 13" fill="none" stroke="#ff0000" stroke-width="3"/>
<path d="M24 1 V10 H15 Z" fill="#ff0000"/>
</svg>
<div class="t" style="left:408.30px;top:944.80px;font-size:16px;font-weight:normal;color:#000;letter-spacing:0.133px;"><u>R</u>etorna</div>
<div class="r" style="left:860px;top:934px;width:113px;height:34px;background:#f0f0f0;box-sizing:border-box;border:1px solid;border-color:#ffffff #606060 #606060 #ffffff;box-shadow:inset -1px -1px 0 #a0a0a0"></div>
<svg style="left:869px;top:941px" width="25" height="21" viewBox="0 0 25 21">
<path d="M0 11 L3 8.5 L8 14 C11 8 17 3 24 0 L24.5 1 C18 5 13 12 9 21 Z" fill="#ff0000"/>
<path d="M8 14 C11 8 17 3 24 0 L24.5 1 C18 5 13 12 9 21 Z" fill="#c00000" opacity="0.5"/>
</svg>
<div class="t" style="left:898.90px;top:944.90px;font-size:16px;font-weight:normal;color:#000;letter-spacing:-0.229px;"><u>C</u>onfirma</div>
<div class="r" style="left:983px;top:934px;width:113px;height:34px;background:#f0f0f0;box-sizing:border-box;border:1px solid;border-color:#ffffff #606060 #606060 #ffffff;box-shadow:inset -1px -1px 0 #a0a0a0"></div>
<svg style="left:999px;top:942px" width="22" height="21" viewBox="0 0 22 21">
<path d="M3.5 3 L18.5 18 M18.5 3 L3.5 18" stroke="#7a0000" stroke-width="4.6" stroke-linecap="square"/>
<path d="M2.5 2.5 L8 8 M19.5 2.5 L15 7" stroke="#d01010" stroke-width="1.6" stroke-linecap="square"/>
</svg>
<div class="t" style="left:1026.60px;top:944.90px;font-size:16px;font-weight:normal;color:#000;letter-spacing:-0.267px;">C<u>a</u>ncela</div>
</body></html>
